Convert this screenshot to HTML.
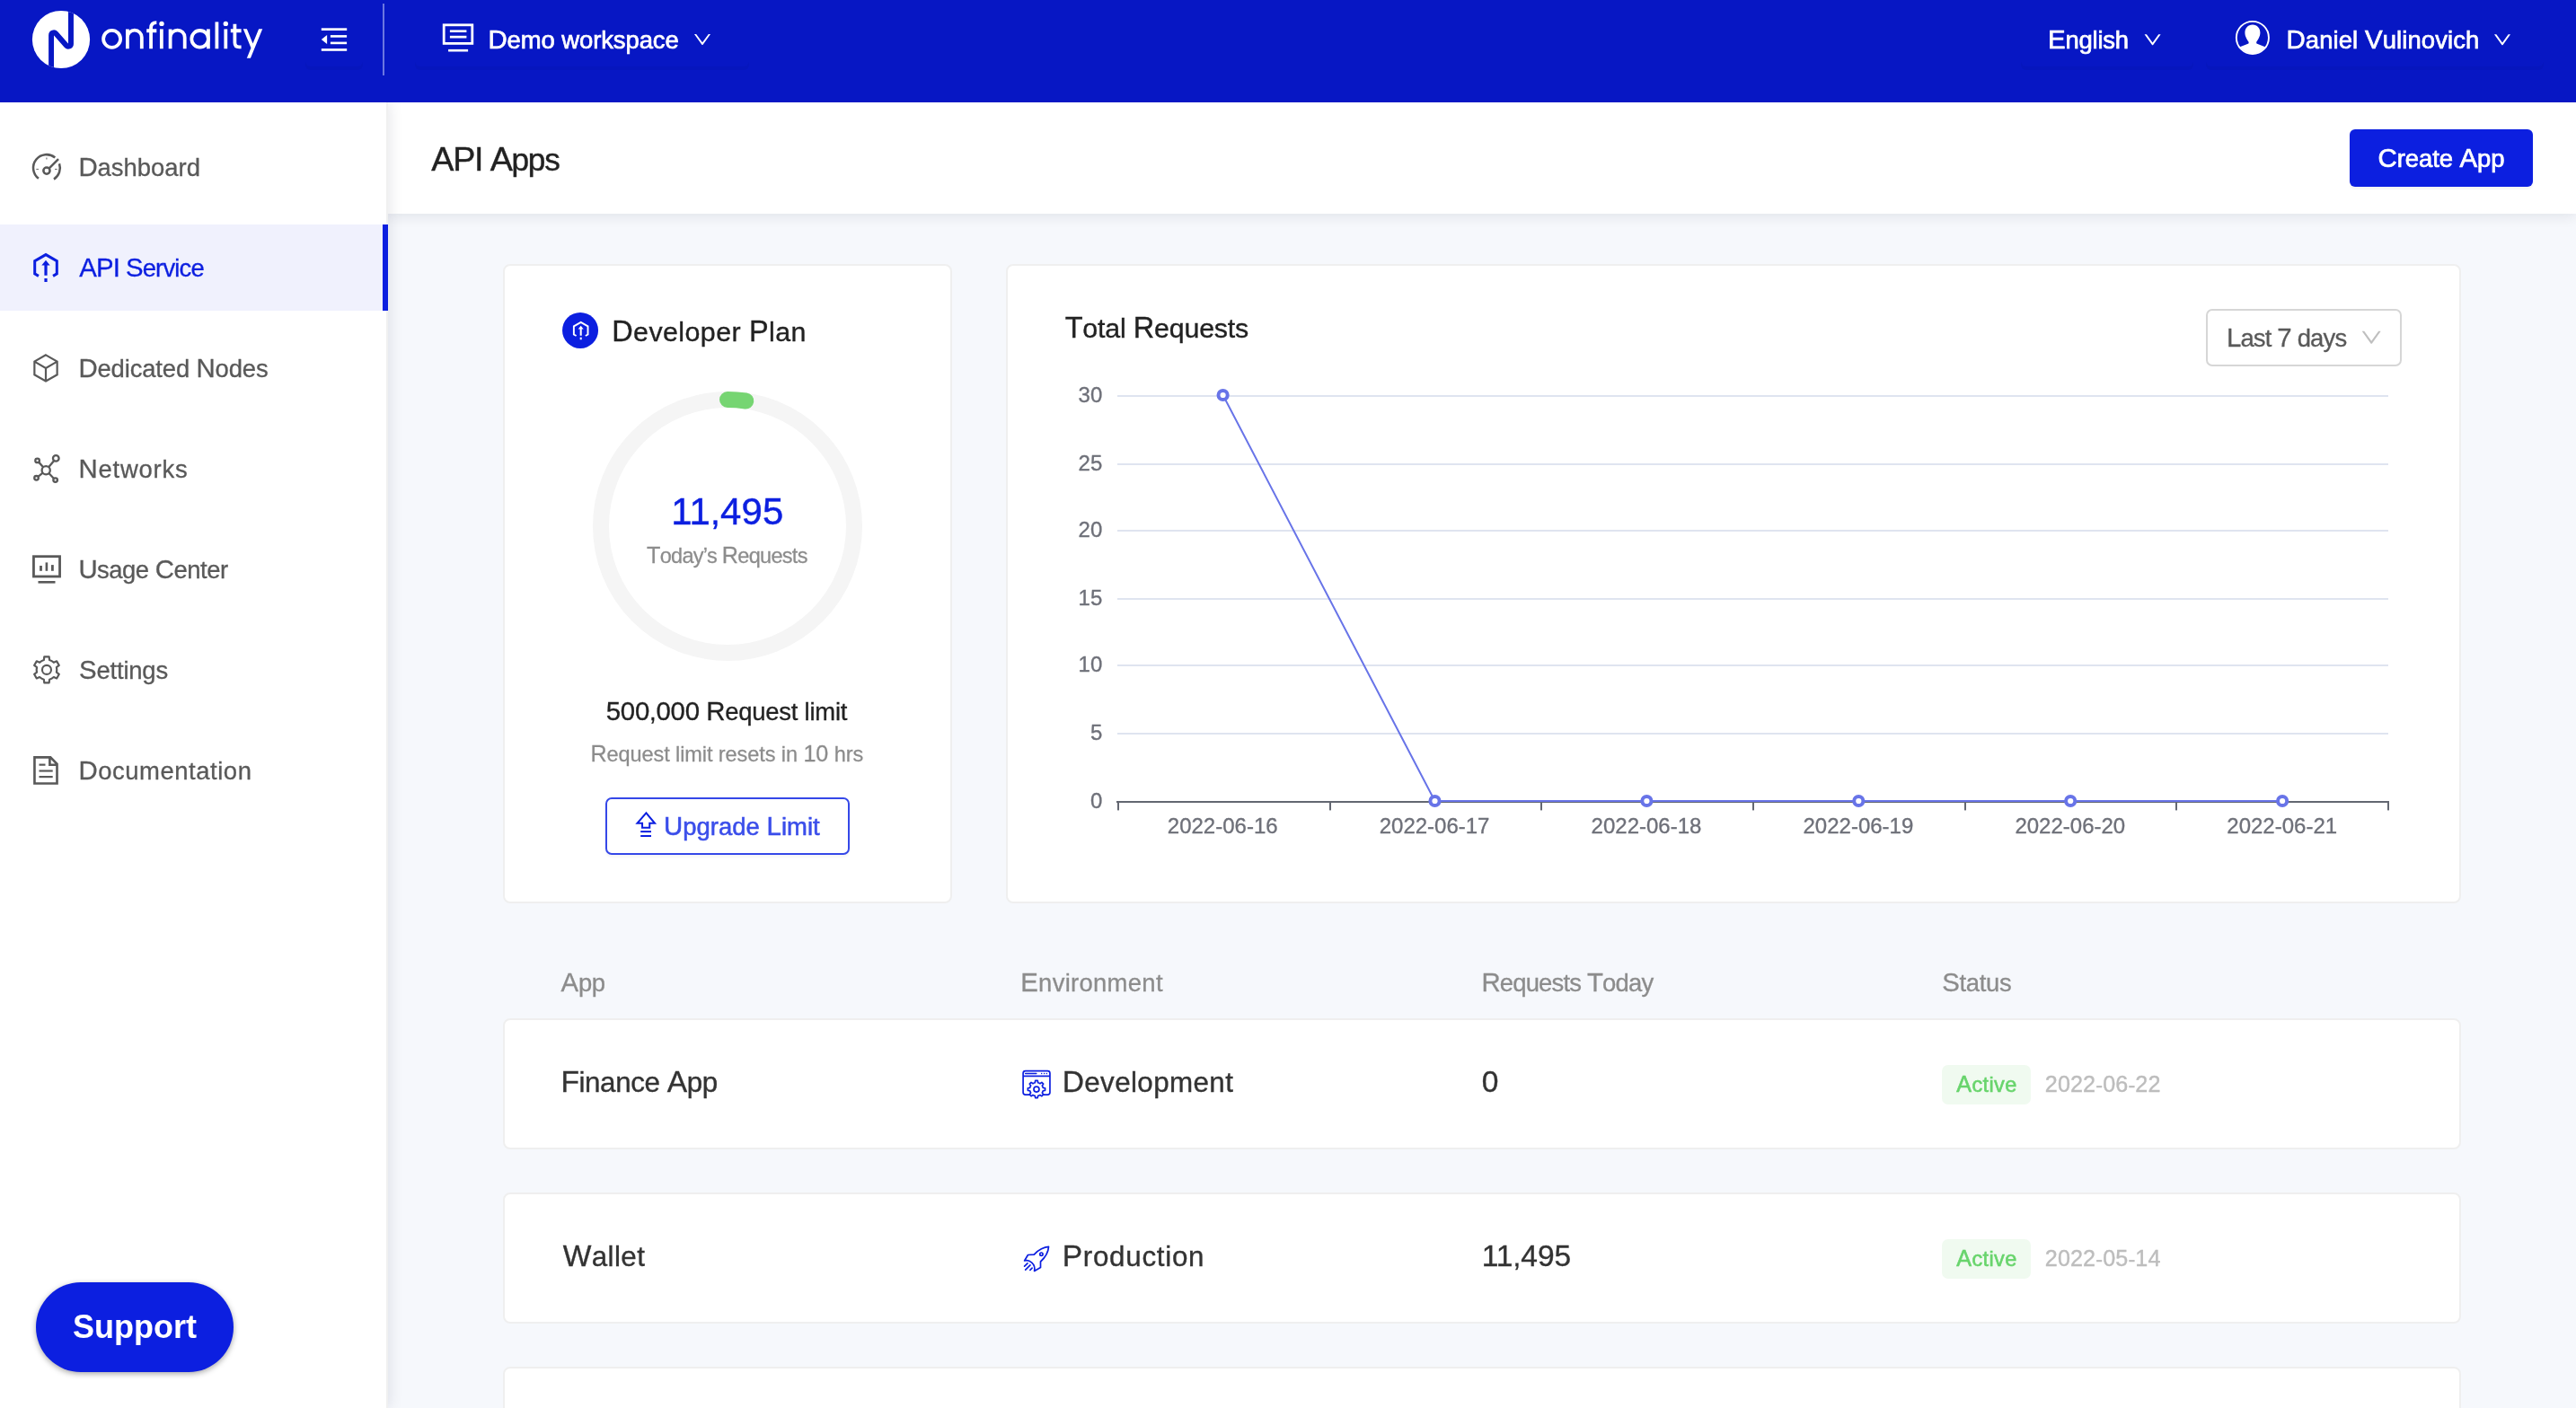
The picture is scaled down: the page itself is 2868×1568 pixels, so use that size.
<!DOCTYPE html>
<html><head><meta charset="utf-8"><title>API Apps</title>
<style>
*{box-sizing:border-box;margin:0;padding:0}
html,body{width:2868px;height:1568px;background:#f6f8fc}
body{font-family:"Liberation Sans",sans-serif}
#root{position:absolute;left:0;top:0;width:2868px;height:1568px;overflow:hidden;background:#f6f8fc}
.abs{position:absolute}
.t{position:absolute;white-space:nowrap;font-family:"Liberation Sans",sans-serif}
.t .c{font-size:1.07em;line-height:0}
#hdr{left:0;top:0;width:2868px;height:114px;background:#0717c4}
#side{left:0;top:114px;width:430px;height:1454px;background:#fff;box-shadow:3px 0 16px rgba(0,21,41,.11)}
#active{left:0;top:250px;width:432px;height:96px;background:#f0f1fd}
#activebar{left:426px;top:250px;width:6px;height:96px;background:#0c1fe0}
#phdr{left:430px;top:114px;width:2438px;height:124px;background:#fff;box-shadow:0 3px 14px rgba(0,21,41,.09)}
#sideb{left:430px;top:114px;width:2px;height:1454px;background:#f0f0f0}
.card{position:absolute;background:#fff;border:2px solid #efefef;border-radius:8px}
#createbtn{left:2616px;top:144px;width:204px;height:64px;background:#0c1fe0;border-radius:6px;box-shadow:0 3px 2px rgba(0,0,0,.04)}
#support{left:40px;top:1428px;width:220px;height:100px;border-radius:50px;background:#0c1fe0;box-shadow:0 2px 6px rgba(0,0,0,.35)}
#supporttxt{left:40px;top:1428px;width:220px;height:100px;color:#fff;font-weight:700;font-size:36px;line-height:100px;text-align:center}
#upg{left:674px;top:888px;width:272px;height:64px;border:2px solid #3548e8;border-radius:7px;background:#fff;box-shadow:0 3px 2px rgba(0,0,0,.03)}
#sel{left:2456px;top:344px;width:218px;height:64px;border:2px solid #d6d6d6;border-radius:7px;background:#fff}
.hb{top:10px;height:64px;border-radius:6px;box-shadow:0 4px 0 rgba(0,0,0,.035)}
.tag{position:absolute;left:2162px;width:99px;height:44px;border-radius:7px;background:#f0faf0}
</style></head><body><div id="root">
<div class="abs" id="phdr"></div>
<div class="abs" id="side"></div>
<div class="abs" id="sideb"></div>
<div class="abs" id="hdr"></div>
<div class="abs hb" style="left:340px;width:64px"></div><div class="abs hb" style="left:462px;width:372px"></div><div class="abs hb" style="left:2250px;width:192px"></div><div class="abs hb" style="left:2456px;width:376px"></div>
<div class="abs" id="active"></div>
<div class="abs" id="activebar"></div>
<div class="abs" id="support"></div>
<div class="abs" id="createbtn"></div>
<div class="card" style="left:560px;top:294px;width:500px;height:712px"></div>
<div class="card" style="left:1120px;top:294px;width:1620px;height:712px"></div>
<div class="card" style="left:560px;top:1134px;width:2180px;height:146px"></div>
<div class="card" style="left:560px;top:1328px;width:2180px;height:146px"></div>
<div class="card" style="left:560px;top:1522px;width:2180px;height:146px"></div>
<div class="abs" id="upg"></div>
<div class="abs" id="sel"></div>
<div class="tag" style="top:1186px"></div>
<div class="tag" style="top:1380px"></div>
<svg class="abs" style="left:0;top:0;will-change:transform" width="2868" height="1568" viewBox="0 0 2868 1568">
<rect x="1244" y="440" width="1415" height="2" fill="#dfe4f0"/>
<rect x="1244" y="516" width="1415" height="2" fill="#dfe4f0"/>
<rect x="1244" y="590" width="1415" height="2" fill="#dfe4f0"/>
<rect x="1244" y="666" width="1415" height="2" fill="#dfe4f0"/>
<rect x="1244" y="740" width="1415" height="2" fill="#dfe4f0"/>
<rect x="1244" y="816" width="1415" height="2" fill="#dfe4f0"/>
<rect x="1243" y="892" width="1417" height="2" fill="#636771"/>
<rect x="1244" y="893" width="2" height="9.4" fill="#636771"/>
<rect x="1480" y="893" width="2" height="9.4" fill="#636771"/>
<rect x="1715" y="893" width="2" height="9.4" fill="#636771"/>
<rect x="1951" y="893" width="2" height="9.4" fill="#636771"/>
<rect x="2187" y="893" width="2" height="9.4" fill="#636771"/>
<rect x="2422" y="893" width="2" height="9.4" fill="#636771"/>
<rect x="2658" y="893" width="2" height="9.4" fill="#636771"/>
<polyline fill="none" stroke="#6874e8" stroke-width="2" stroke-linejoin="bevel" points="1361.6,440.0 1597.5,892.0 1833.4,892.0 2069.3,892.0 2305.2,892.0 2541.1,892.0"/>
<circle cx="1361.6" cy="440.0" r="5.1" fill="#fff" stroke="#6874e8" stroke-width="4"/>
<circle cx="1597.5" cy="892.0" r="5.1" fill="#fff" stroke="#6874e8" stroke-width="4"/>
<circle cx="1833.4" cy="892.0" r="5.1" fill="#fff" stroke="#6874e8" stroke-width="4"/>
<circle cx="2069.3" cy="892.0" r="5.1" fill="#fff" stroke="#6874e8" stroke-width="4"/>
<circle cx="2305.2" cy="892.0" r="5.1" fill="#fff" stroke="#6874e8" stroke-width="4"/>
<circle cx="2541.1" cy="892.0" r="5.1" fill="#fff" stroke="#6874e8" stroke-width="4"/>
<text x="1227.3" y="448.4" text-anchor="end" font-size="24" fill="#6e7079" stroke="#6e7079" stroke-width=".35" font-family="Liberation Sans, sans-serif">30</text>
<text x="1227.3" y="524.4" text-anchor="end" font-size="24" fill="#6e7079" stroke="#6e7079" stroke-width=".35" font-family="Liberation Sans, sans-serif">25</text>
<text x="1227.3" y="598.4" text-anchor="end" font-size="24" fill="#6e7079" stroke="#6e7079" stroke-width=".35" font-family="Liberation Sans, sans-serif">20</text>
<text x="1227.3" y="674.4" text-anchor="end" font-size="24" fill="#6e7079" stroke="#6e7079" stroke-width=".35" font-family="Liberation Sans, sans-serif">15</text>
<text x="1227.3" y="748.4" text-anchor="end" font-size="24" fill="#6e7079" stroke="#6e7079" stroke-width=".35" font-family="Liberation Sans, sans-serif">10</text>
<text x="1227.3" y="824.4" text-anchor="end" font-size="24" fill="#6e7079" stroke="#6e7079" stroke-width=".35" font-family="Liberation Sans, sans-serif">5</text>
<text x="1227.3" y="900.4" text-anchor="end" font-size="24" fill="#6e7079" stroke="#6e7079" stroke-width=".35" font-family="Liberation Sans, sans-serif">0</text>
<text x="1361.2" y="928" text-anchor="middle" font-size="24" fill="#6e7079" stroke="#6e7079" stroke-width=".35" font-family="Liberation Sans, sans-serif">2022-06-16</text>
<text x="1597.1" y="928" text-anchor="middle" font-size="24" fill="#6e7079" stroke="#6e7079" stroke-width=".35" font-family="Liberation Sans, sans-serif">2022-06-17</text>
<text x="1833.0" y="928" text-anchor="middle" font-size="24" fill="#6e7079" stroke="#6e7079" stroke-width=".35" font-family="Liberation Sans, sans-serif">2022-06-18</text>
<text x="2068.9" y="928" text-anchor="middle" font-size="24" fill="#6e7079" stroke="#6e7079" stroke-width=".35" font-family="Liberation Sans, sans-serif">2022-06-19</text>
<text x="2304.8" y="928" text-anchor="middle" font-size="24" fill="#6e7079" stroke="#6e7079" stroke-width=".35" font-family="Liberation Sans, sans-serif">2022-06-20</text>
<text x="2540.7" y="928" text-anchor="middle" font-size="24" fill="#6e7079" stroke="#6e7079" stroke-width=".35" font-family="Liberation Sans, sans-serif">2022-06-21</text>
</svg>
<svg class="abs" style="left:0;top:0" width="2868" height="1568" viewBox="0 0 2868 1568" fill="none">
<defs><clipPath id="lc"><circle cx="68" cy="44" r="32.1"/></clipPath><clipPath id="yc"><rect x="268" y="32.2" width="26" height="32.6"/></clipPath><clipPath id="av"><circle cx="2507.9" cy="41.9" r="17.6"/></clipPath></defs>
<circle cx="68" cy="44" r="32.1" fill="#fff"/>
<path clip-path="url(#lc)" d="M57.06,82 L57.06,39.2 A2.875,2.875 0 0 1 62.09,37.3 L73.94,50.8 A2.875,2.875 0 0 0 78.98,48.9 L78.98,4" stroke="#0717c4" stroke-width="5.9"/>
<g stroke="#fff" stroke-width="3.8"><circle cx="124.6" cy="43.3" r="9.5"/><path d="M141.9,54.25 V32.4 M141.9,41.6 A7.95,7.95 0 0 1 157.8,41.6 V54.25"/><path d="M168.05,54.25 V31.2 Q168.05,25.1 174.3,25.1 M163.2,34.25 H174.3"/><path d="M179.85,54.25 V32.4"/><path d="M189.6,54.25 V32.4 M189.6,41.65 A8.05,8.05 0 0 1 205.7,41.65 V54.25"/><circle cx="222.6" cy="43.3" r="9.3"/><path d="M231.9,32.4 V54.25"/><path d="M241.4,24.4 V54.25"/><path d="M251.3,32.4 V54.25"/><path d="M261.4,26.7 V47.5 Q261.4,52.4 266.3,52.4 H268.6 M256.8,34.25 H268.6"/><path clip-path="url(#yc)" d="M272.08,30.4 L281.6,53.6 M290.92,30.4 L276.08,66.7"/></g>
<circle cx="180.0" cy="26.4" r="2.7" fill="#fff"/><circle cx="251.3" cy="26.4" r="2.7" fill="#fff"/>
<g fill="#fff"><rect x="357.8" y="31.3" width="28.4" height="2.7"/><rect x="367.9" y="39.1" width="18.2" height="2.6"/><rect x="367.9" y="46.6" width="18.2" height="2.6"/><rect x="357.8" y="54.1" width="28.4" height="2.7"/><path d="M357.8,44 L364.1,38.9 V49.1 Z"/></g>
<rect x="426" y="4" width="2" height="80" fill="#6b76e0"/>
<rect x="494.2" y="27.8" width="31.6" height="20.6" stroke="#fff" stroke-width="2.8"/>
<g fill="#fff"><rect x="500.9" y="33.4" width="18.5" height="2.6"/><rect x="500.9" y="39.8" width="18.5" height="2.7"/><rect x="499.1" y="54.9" width="22" height="2.6"/></g>
<path transform="translate(770.00,32.00) scale(0.02344)" d="M884 256h-75c-5.100 0-9.900 2.500-12.900 6.600L512 654.200 227.900 262.600c-3-4.100-7.800-6.600-12.900-6.600h-75c-6.500 0-10.300 7.400-6.500 12.700l352.600 486.100c12.800 17.600 39 17.600 51.700 0l352.600-486.100c3.900-5.300.1-12.700-6.400-12.700z" fill="#fff"/>
<path transform="translate(2384.60,32.20) scale(0.02344)" d="M884 256h-75c-5.100 0-9.900 2.500-12.900 6.600L512 654.200 227.900 262.600c-3-4.100-7.800-6.600-12.900-6.600h-75c-6.500 0-10.300 7.400-6.500 12.700l352.600 486.100c12.800 17.600 39 17.600 51.700 0l352.600-486.100c3.900-5.300.1-12.700-6.400-12.700z" fill="#fff"/>
<path transform="translate(2774.00,32.20) scale(0.02344)" d="M884 256h-75c-5.100 0-9.900 2.500-12.900 6.600L512 654.200 227.900 262.600c-3-4.100-7.800-6.600-12.900-6.600h-75c-6.500 0-10.300 7.400-6.500 12.700l352.600 486.100c12.800 17.600 39 17.600 51.700 0l352.600-486.100c3.900-5.300.1-12.700-6.400-12.700z" fill="#fff"/>
<path transform="translate(2626.20,361.75) scale(0.02734)" d="M884 256h-75c-5.100 0-9.900 2.500-12.900 6.600L512 654.200 227.900 262.600c-3-4.100-7.800-6.600-12.900-6.600h-75c-6.500 0-10.300 7.400-6.500 12.700l352.600 486.100c12.800 17.600 39 17.600 51.700 0l352.600-486.100c3.900-5.300.1-12.700-6.400-12.700z" fill="#bfbfbf"/>
<circle cx="2507.9" cy="41.9" r="18.05" stroke="#fff" stroke-width="1.9"/>
<g clip-path="url(#av)" fill="#fff"><path d="M2507.9,27.5 C2513.2,27.5 2516.4,31.6 2516.4,36.6 C2516.4,41 2513.6,44.6 2512.1,47 L2512.4,48.6 L2522.5,52.4 L2526,64 L2490,64 L2493.2,52.6 L2503.4,48.6 L2503.7,47 C2502.2,44.6 2499.4,41 2499.4,36.6 C2499.4,31.6 2502.6,27.5 2507.9,27.5 Z"/></g>
<g stroke="#595959" stroke-width="2.55">
<path d="M42.94,198.76 A14.8,14.8 0 1 1 61.26,175.52"/><path d="M66.03,182.23 A14.8,14.8 0 0 1 60.00,199.58"/>
<path d="M54.3,187.8 L65.05,177.1"/><circle cx="51.95" cy="190.1" r="3.6"/>
</g>
<g stroke="#595959" stroke-width="1.2" opacity=".8"><path d="M40.3,188.5 H43"/><path d="M61,188.5 H63.7"/><path d="M51.9,175.5 V177.6"/></g>
<g ><path d="M42.95,307.35 L38.70,304.90 L38.70,290.70 L51.00,283.60 L63.30,290.70 L63.30,304.90 L59.05,307.35" stroke="#0c1fe0" stroke-width="3" stroke-linejoin="miter"/><path d="M51,289.7 L55.7,295.4 H52.6 V306.8 H49.4 V295.4 H46.3 Z" fill="#0c1fe0"/><rect x="49.4" y="310" width="3.2" height="4" fill="#0c1fe0"/></g>
<path d="M51.00,395.35 L63.64,402.65 L63.64,417.25 L51.00,424.55 L38.36,417.25 L38.36,402.65 Z M38.36,402.65 L51,409.95 L63.64,402.65 M51,409.95 L51.00,424.55" stroke="#595959" stroke-width="2.2" stroke-linejoin="miter"/>
<g stroke="#595959" stroke-width="2.3">
<path d="M54.14,520.22 L60.17,512.94"/>
<circle cx="62.28" cy="510.4" r="3.3"/>
<path d="M48.15,520.31 L43.12,514.62"/>
<circle cx="41.6" cy="512.9" r="2.3"/>
<path d="M47.61,526.64 L42.34,530.86"/>
<circle cx="40.54" cy="532.3" r="2.3"/>
<path d="M54.39,527.07 L60.04,532.94"/>
<circle cx="61.64" cy="534.6" r="2.3"/>
<circle cx="51.2" cy="523.76" r="4.6"/></g>
<rect x="37.45" y="619.7" width="29.1" height="22.3" stroke="#595959" stroke-width="2.8"/>
<g fill="#595959"><rect x="44.1" y="630" width="2.8" height="5.8"/><rect x="50.6" y="626.4" width="2.6" height="9.4"/><rect x="57" y="629.1" width="2.8" height="6.7"/><rect x="42.5" y="647" width="19" height="2.6"/></g>
<path d="M55.08,735.04 L54.65,731.45 L49.29,731.45 L48.86,735.04 A11.3,11.3 0 0 0 44.12,737.77 L40.79,736.35 L38.11,740.99 L41.01,743.17 A11.3,11.3 0 0 0 41.01,748.63 L38.11,750.81 L40.79,755.45 L44.12,754.03 A11.3,11.3 0 0 0 48.86,756.76 L49.29,760.35 L54.65,760.35 L55.08,756.76 A11.3,11.3 0 0 0 59.82,754.03 L63.15,755.45 L65.83,750.81 L62.93,748.63 A11.3,11.3 0 0 0 62.93,743.17 L65.83,740.99 L63.15,736.35 L59.82,737.77 A11.3,11.3 0 0 0 55.08,735.04 Z" stroke="#595959" stroke-width="2.2" stroke-linejoin="round"/>
<circle cx="51.97" cy="745.9" r="5.0" stroke="#595959" stroke-width="2.1"/>
<path d="M38.45,843.4 H56.2 L63.5,850.7 V872.5 H38.45 Z M55.4,843.4 V851.7 H63.5" stroke="#595959" stroke-width="2.65" stroke-linejoin="miter"/>
<g stroke="#595959" stroke-width="2.2"><path d="M43.5,851.65 H50.5"/><path d="M43.5,858.5 H58.7"/><path d="M43.5,865.1 H58.7"/></g>
<circle cx="646.05" cy="367.9" r="20" fill="#0c1fe0"/>
<g transform="translate(614.26,178.54) scale(0.636)"><path d="M42.95,307.35 L38.70,304.90 L38.70,290.70 L51.00,283.60 L63.30,290.70 L63.30,304.90 L59.05,307.35" stroke="#fff" stroke-width="3" stroke-linejoin="miter"/><path d="M51,289.7 L55.7,295.4 H52.6 V306.8 H49.4 V295.4 H46.3 Z" fill="#fff"/><rect x="49.4" y="310" width="3.2" height="4" fill="#fff"/></g>
<circle cx="810" cy="586" r="141" stroke="#f5f5f5" stroke-width="18"/>
<path d="M810,445 A141,141 0 0 1 830.30,446.47" stroke="#76d572" stroke-width="18" stroke-linecap="round"/>
<path d="M719.4,905.4 L709.5,916.75 H715.05 V921.65 H723.25 V916.75 H729 Z" stroke="#0c1fe0" stroke-width="2" stroke-linejoin="miter"/>
<g fill="#0c1fe0"><rect x="713.2" y="925.1" width="11.8" height="2"/><rect x="713.2" y="930" width="11.8" height="2"/></g>
<g stroke="#0c1fe0" stroke-width="1.7"><rect x="1139.1" y="1192.7" width="29.85" height="26.4" rx="2.6"/><path d="M1139.1,1198.4 H1168.95"/><path d="M1141.6,1195.5 H1153.8" stroke-linecap="round" stroke-width="1.5"/></g>
<g fill="#0c1fe0"><circle cx="1159.7" cy="1195.5" r=".75"/><circle cx="1162.6" cy="1195.5" r=".75"/><circle cx="1165.4" cy="1195.5" r=".75"/></g>
<path d="M1155.66,1205.73 L1155.24,1203.42 L1152.70,1203.42 L1152.28,1205.73 A7.5,7.5 0 0 0 1150.00,1206.68 L1148.07,1205.34 L1146.27,1207.14 L1147.61,1209.07 A7.5,7.5 0 0 0 1146.66,1211.35 L1144.35,1211.77 L1144.35,1214.31 L1146.66,1214.73 A7.5,7.5 0 0 0 1147.61,1217.01 L1146.27,1218.94 L1148.07,1220.74 L1150.00,1219.40 A7.5,7.5 0 0 0 1152.28,1220.35 L1152.70,1222.66 L1155.24,1222.66 L1155.66,1220.35 A7.5,7.5 0 0 0 1157.94,1219.40 L1159.87,1220.74 L1161.67,1218.94 L1160.33,1217.01 A7.5,7.5 0 0 0 1161.28,1214.73 L1163.59,1214.31 L1163.59,1211.77 L1161.28,1211.35 A7.5,7.5 0 0 0 1160.33,1209.07 L1161.67,1207.14 L1159.87,1205.34 L1157.94,1206.68 A7.5,7.5 0 0 0 1155.66,1205.73 Z" stroke="#0c1fe0" stroke-width="1.7" stroke-linejoin="round" fill="#fff"/>
<circle cx="1153.97" cy="1213.04" r="3.0" stroke="#0c1fe0" stroke-width="1.7"/>
<g stroke="#0c1fe0" stroke-width="1.7" stroke-linejoin="round" stroke-linecap="round">
<path d="M1167.5,1388.4 C1163,1388.6 1156,1391.5 1151.3,1397.1 L1144.5,1397.5 L1140.6,1404 C1146,1402.2 1153.3,1407.5 1151.6,1415.4 L1158.5,1411.4 L1158.5,1405 C1163.5,1400.5 1167.2,1394.5 1167.5,1388.4 Z"/>
<circle cx="1159.4" cy="1396.65" r="1.65"/>
<path d="M1140.6,1410.2 L1144,1406.8 M1141.7,1414.2 L1147,1408.9 M1146.9,1414.3 L1149.1,1412.1"/>
</g>
</svg>
<div id="txt" style="position:absolute;left:0;top:0;width:2868px;height:1568px;will-change:transform">
<span class="t" style="left:87.40px;top:173px;font-size:27.44px;line-height:28px;color:#595959;letter-spacing:0.000px;-webkit-text-stroke:0.31px #595959;"><span class="c">D</span>ashboard</span>
<span class="t" style="left:88.20px;top:285px;font-size:27.44px;line-height:28px;color:#0c1fe0;letter-spacing:-0.820px;-webkit-text-stroke:0.31px #0c1fe0;"><span class="c">API</span> <span class="c">S</span>ervice</span>
<span class="t" style="left:87.40px;top:397px;font-size:27.44px;line-height:28px;color:#595959;letter-spacing:-0.143px;-webkit-text-stroke:0.31px #595959;"><span class="c">D</span>edicated <span class="c">N</span>odes</span>
<span class="t" style="left:87.40px;top:509px;font-size:27.44px;line-height:28px;color:#595959;letter-spacing:0.800px;-webkit-text-stroke:0.31px #595959;"><span class="c">N</span>etworks</span>
<span class="t" style="left:87.40px;top:621px;font-size:27.44px;line-height:28px;color:#595959;letter-spacing:-0.491px;-webkit-text-stroke:0.31px #595959;"><span class="c">U</span>sage <span class="c">C</span>enter</span>
<span class="t" style="left:88.10px;top:733px;font-size:27.44px;line-height:28px;color:#595959;letter-spacing:-0.200px;-webkit-text-stroke:0.31px #595959;"><span class="c">S</span>ettings</span>
<span class="t" style="left:87.40px;top:845px;font-size:27.44px;line-height:28px;color:#595959;letter-spacing:0.550px;-webkit-text-stroke:0.31px #595959;"><span class="c">D</span>ocumentation</span>
<span class="t" style="left:543.40px;top:31px;font-size:27.44px;line-height:28px;color:#fff;letter-spacing:-0.077px;-webkit-text-stroke:0.7px #fff;"><span class="c">D</span>emo workspace</span>
<span class="t" style="left:2280.00px;top:31px;font-size:27.44px;line-height:28px;color:#fff;letter-spacing:-0.200px;-webkit-text-stroke:0.7px #fff;"><span class="c">E</span>nglish</span>
<span class="t" style="left:2545.50px;top:31px;font-size:27.44px;line-height:28px;color:#fff;letter-spacing:0.100px;-webkit-text-stroke:0.7px #fff;"><span class="c">D</span>aniel <span class="c">V</span>ulinovich</span>
<span class="t" style="left:480.30px;top:160px;font-size:35.28px;line-height:36px;color:#222;letter-spacing:-1.314px;-webkit-text-stroke:0.4px #222;"><span class="c">API</span> <span class="c">A</span>pps</span>
<span class="t" style="left:2647.60px;top:163px;font-size:27.44px;line-height:28px;color:#fff;letter-spacing:-0.067px;-webkit-text-stroke:0.7px #fff;"><span class="c">C</span>reate <span class="c">A</span>pp</span>
<span class="t" style="left:681.20px;top:354px;font-size:30.38px;line-height:31px;color:#222;letter-spacing:0.431px;-webkit-text-stroke:0.34px #222;"><span class="c">D</span>eveloper <span class="c">P</span>lan</span>
<span class="t" style="left:747.20px;top:551px;font-size:39.2px;line-height:40px;color:#0c1fe0;letter-spacing:0.160px;-webkit-text-stroke:0.44px #0c1fe0;"><span class="c">11</span>,<span class="c">495</span></span>
<span class="t" style="left:720.00px;top:607px;font-size:23.52px;line-height:24px;color:#8c8c8c;letter-spacing:-0.707px;-webkit-text-stroke:0.26px #8c8c8c;"><span class="c">T</span>oday’s <span class="c">R</span>equests</span>
<span class="t" style="left:674.70px;top:779px;font-size:27.44px;line-height:28px;color:#222;letter-spacing:-0.220px;-webkit-text-stroke:0.31px #222;"><span class="c">500</span>,<span class="c">000</span> <span class="c">R</span>equest limit</span>
<span class="t" style="left:657.50px;top:828px;font-size:23.52px;line-height:24px;color:#8c8c8c;letter-spacing:-0.090px;-webkit-text-stroke:0.26px #8c8c8c;"><span class="c">R</span>equest limit resets in <span class="c">10</span> hrs</span>
<span class="t" style="left:739.00px;top:907px;font-size:27.44px;line-height:28px;color:#3b4eea;letter-spacing:0.033px;-webkit-text-stroke:0.55px #3b4eea;"><span class="c">U</span>pgrade <span class="c">L</span>imit</span>
<span class="t" style="left:1185.70px;top:350px;font-size:30.38px;line-height:31px;color:#222;letter-spacing:-0.200px;-webkit-text-stroke:0.34px #222;"><span class="c">T</span>otal <span class="c">R</span>equests</span>
<span class="t" style="left:2478.90px;top:363px;font-size:27.44px;line-height:28px;color:#595959;letter-spacing:-0.820px;-webkit-text-stroke:0.31px #595959;"><span class="c">L</span>ast <span class="c">7</span> days</span>
<span class="t" style="left:624.60px;top:1081px;font-size:27.44px;line-height:28px;color:#8c8c8c;letter-spacing:-0.300px;-webkit-text-stroke:0.31px #8c8c8c;"><span class="c">A</span>pp</span>
<span class="t" style="left:1136.20px;top:1081px;font-size:27.44px;line-height:28px;color:#8c8c8c;letter-spacing:0.300px;-webkit-text-stroke:0.31px #8c8c8c;"><span class="c">E</span>nvironment</span>
<span class="t" style="left:1649.40px;top:1081px;font-size:27.44px;line-height:28px;color:#8c8c8c;letter-spacing:-0.815px;-webkit-text-stroke:0.31px #8c8c8c;"><span class="c">R</span>equests <span class="c">T</span>oday</span>
<span class="t" style="left:2162.20px;top:1081px;font-size:27.44px;line-height:28px;color:#8c8c8c;letter-spacing:-0.320px;-webkit-text-stroke:0.31px #8c8c8c;"><span class="c">S</span>tatus</span>
<span class="t" style="left:624.40px;top:1190px;font-size:31.36px;line-height:32px;color:#333;letter-spacing:-0.400px;-webkit-text-stroke:0.35px #333;"><span class="c">F</span>inance <span class="c">A</span>pp</span>
<span class="t" style="left:1182.70px;top:1190px;font-size:31.36px;line-height:32px;color:#333;letter-spacing:0.380px;-webkit-text-stroke:0.35px #333;"><span class="c">D</span>evelopment</span>
<span class="t" style="left:1649.70px;top:1190px;font-size:31.36px;line-height:32px;color:#333;letter-spacing:0.000px;-webkit-text-stroke:0.35px #333;"><span class="c">0</span></span>
<span class="t" style="left:2178.30px;top:1196px;font-size:23.52px;line-height:24px;color:#68d46c;letter-spacing:0.360px;-webkit-text-stroke:0.6px #68d46c;"><span class="c">A</span>ctive</span>
<span class="t" style="left:2276.80px;top:1196px;font-size:23.52px;line-height:24px;color:#bdbdbd;letter-spacing:0.111px;-webkit-text-stroke:0.4px #bdbdbd;"><span class="c">2022</span>-<span class="c">06</span>-<span class="c">22</span></span>
<span class="t" style="left:626.70px;top:1384px;font-size:31.36px;line-height:32px;color:#333;letter-spacing:0.400px;-webkit-text-stroke:0.35px #333;"><span class="c">W</span>allet</span>
<span class="t" style="left:1182.70px;top:1384px;font-size:31.36px;line-height:32px;color:#333;letter-spacing:0.711px;-webkit-text-stroke:0.35px #333;"><span class="c">P</span>roduction</span>
<span class="t" style="left:1649.70px;top:1384px;font-size:31.36px;line-height:32px;color:#333;letter-spacing:0.000px;-webkit-text-stroke:0.35px #333;"><span class="c">11</span>,<span class="c">495</span></span>
<span class="t" style="left:2178.30px;top:1390px;font-size:23.52px;line-height:24px;color:#68d46c;letter-spacing:0.360px;-webkit-text-stroke:0.6px #68d46c;"><span class="c">A</span>ctive</span>
<span class="t" style="left:2276.80px;top:1390px;font-size:23.52px;line-height:24px;color:#bdbdbd;letter-spacing:0.111px;-webkit-text-stroke:0.4px #bdbdbd;"><span class="c">2022</span>-<span class="c">05</span>-<span class="c">14</span></span>
<div class="abs" id="supporttxt">Support</div>
</div>

</div></body></html>
